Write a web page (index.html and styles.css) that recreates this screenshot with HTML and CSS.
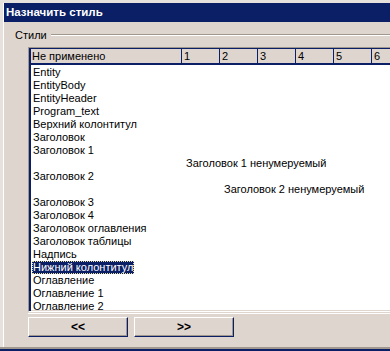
FILE: index.html
```html
<!DOCTYPE html>
<html lang="ru">
<head>
  <meta charset="UTF-8">
  <title>Назначить стиль</title>
  <link rel="stylesheet" href="styles.css">
</head>
<body>

  <!-- Dialog window -->
  <div class="window">
    <div class="titlebar">Назначить стиль</div>

    <div class="content">
      <div class="group-head">
        <span class="group-label">Стили</span>
        <div class="etch"></div>
      </div>

      <!-- Styles list with column header -->
      <div class="list">
        <div class="list-inner">
          <div class="list-head">
            <div class="col first">Не применено</div>
            <div class="col">1</div>
            <div class="col">2</div>
            <div class="col">3</div>
            <div class="col">4</div>
            <div class="col">5</div>
            <div class="col last">6</div>
          </div>
          <div class="items">
            <div class="item">Entity</div>
            <div class="item">EntityBody</div>
            <div class="item">EntityHeader</div>
            <div class="item">Program_text</div>
            <div class="item">Верхний колонтитул</div>
            <div class="item">Заголовок</div>
            <div class="item">Заголовок 1</div>
            <div class="item lvl1">Заголовок 1 ненумеруемый</div>
            <div class="item">Заголовок 2</div>
            <div class="item lvl2">Заголовок 2 ненумеруемый</div>
            <div class="item">Заголовок 3</div>
            <div class="item">Заголовок 4</div>
            <div class="item">Заголовок оглавления</div>
            <div class="item">Заголовок таблицы</div>
            <div class="item">Надпись</div>
            <div class="item"><span class="selected">Нижний колонтитул</span></div>
            <div class="item">Оглавление</div>
            <div class="item">Оглавление 1</div>
            <div class="item">Оглавление 2</div>
          </div>
        </div>
      </div>

      <div class="buttons">
        <button class="btn">&lt;&lt;</button>
        <button class="btn">&gt;&gt;</button>
      </div>
    </div>
  </div>

  <div class="bottom-line"></div>

</body>
</html>
```

FILE: styles.css
```css
body {
  margin: 0;
  padding-top: 3px;
  width: 390px;
  height: 351px;
  overflow: hidden;
  background-color: #e6e1dc;
  font-family: "Liberation Sans", Arial, sans-serif;
  font-size: 11px;
  color: #000;
  box-sizing: border-box;
}

.window {
  margin-left: 3px;
  height: 344px;
  border-left: 1px solid #fff;
  background-color: #dfd5cf;
  box-sizing: border-box;
  overflow: hidden;
}

.titlebar {
  height: 19px;
  line-height: 19px;
  padding-left: 2px;
  background-color: #0b1f66;
  color: #fff;
  font-weight: bold;
  font-size: 11.5px;
  white-space: nowrap;
}

.group-head {
  display: flex;
  align-items: center;
  height: 13px;
  margin-top: 6px;
  padding-left: 11px;
}

.group-label {
  margin-right: 4px;
}

.etch {
  flex: 1;
  border-top: 1px solid #a0978f;
  border-bottom: 1px solid #fff;
}

.list {
  margin-top: 6px;
  margin-left: 24px;
  width: 420px;
  border-top: 1px solid #a0978f;
  border-left: 1px solid #a0978f;
  border-bottom: 1px solid #fff;
  box-shadow: 0 1px 0 #dfd5cf, 0 2px 0 #fff;
}

.list-inner {
  border-top: 1px solid #0b1f66;
  border-left: 2px solid #0b1f66;
}

.list-head {
  display: flex;
  height: 14px;
  line-height: 14px;
  border-bottom: 2px solid #0b1f66;
}

.col {
  width: 35px;
  padding-left: 2px;
  border-right: 1px solid #0b1f66;
  white-space: nowrap;
}

.col.first {
  width: 149px;
  padding-left: 1px;
}

.col.last {
  width: 30px;
  border-right: none;
}

.items {
  height: 244px;
  padding-top: 1px;
  background-color: #fff;
  border-bottom: 1px solid #dfd5cf;
  overflow: hidden;
}

.item {
  height: 13px;
  line-height: 13px;
  padding-left: 2px;
  white-space: nowrap;
}

.item.lvl1 {
  padding-left: 155px;
}

.item.lvl2 {
  padding-left: 193px;
}

.selected {
  display: inline-block;
  padding: 0 1px;
  margin-left: -1px;
  background-color: #0b1f66;
  color: #fff;
  outline: 1px dotted #e8e0a0;
  outline-offset: -1px;
}

.buttons {
  display: flex;
  gap: 6px;
  margin-top: 5px;
  margin-left: 24px;
}

.btn {
  width: 100px;
  height: 20px;
  padding: 0;
  line-height: 16px;
  background-color: #dfd5cf;
  border: 1px solid;
  border-color: #fff #0b1f66 #0b1f66 #fff;
  box-shadow: inset -1px -1px 0 #a0978f;
  font-family: "Liberation Sans", Arial, sans-serif;
  font-size: 12px;
  font-weight: bold;
  color: #000;
}

.bottom-line {
  height: 3px;
  border-top: 2px solid #a0978f;
  background-color: #0b1f66;
}
```
